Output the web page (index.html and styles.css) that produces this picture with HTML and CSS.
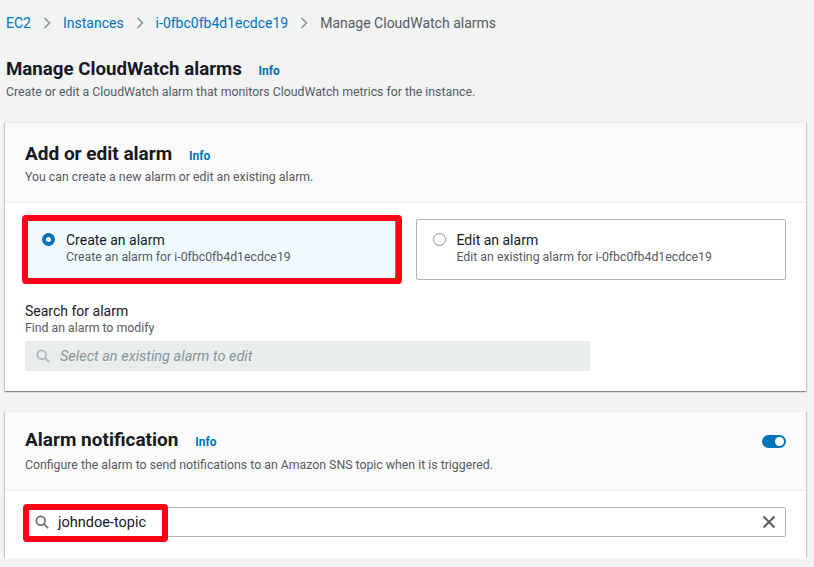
FILE: index.html
```html
<!DOCTYPE html>
<html lang="en">
<head>
<meta charset="utf-8">
<title>Manage CloudWatch alarms</title>
<link rel="stylesheet" href="styles.css">
</head>
<body>
<div class="page">
  <nav class="crumbs">
    <a class="crumb-link" href="#">EC2</a>
    <svg class="sep" width="8" height="12" viewBox="0 0 8 12"><polyline points="1.5,1 6.5,6 1.5,11" fill="none" stroke="#879596" stroke-width="1.6"/></svg>
    <a class="crumb-link" href="#">Instances</a>
    <svg class="sep" width="8" height="12" viewBox="0 0 8 12"><polyline points="1.5,1 6.5,6 1.5,11" fill="none" stroke="#879596" stroke-width="1.6"/></svg>
    <a class="crumb-link" href="#">i-0fbc0fb4d1ecdce19</a>
    <svg class="sep" width="8" height="12" viewBox="0 0 8 12"><polyline points="1.5,1 6.5,6 1.5,11" fill="none" stroke="#879596" stroke-width="1.6"/></svg>
    <span class="crumb-current">Manage CloudWatch alarms</span>
  </nav>

  <header class="page-head">
    <h1 class="page-title">Manage CloudWatch alarms <a class="info" href="#">Info</a></h1>
    <p class="page-desc">Create or edit a CloudWatch alarm that monitors CloudWatch metrics for the instance.</p>
  </header>

  <section class="panel">
    <div class="panel-head">
      <h2 class="panel-title">Add or edit alarm <a class="info" href="#">Info</a></h2>
      <p class="panel-desc">You can create a new alarm or edit an existing alarm.</p>
    </div>
    <div class="panel-body">
      <div class="tiles">
        <label class="tile tile-selected annotated">
          <span class="radio radio-on"></span>
          <span class="tile-text">
            <span class="tile-label">Create an alarm</span>
            <span class="tile-sub">Create an alarm for i-0fbc0fb4d1ecdce19</span>
          </span>
        </label>
        <label class="tile">
          <span class="radio"></span>
          <span class="tile-text">
            <span class="tile-label">Edit an alarm</span>
            <span class="tile-sub">Edit an existing alarm for i-0fbc0fb4d1ecdce19</span>
          </span>
        </label>
      </div>
      <div class="field">
        <div class="field-label">Search for alarm</div>
        <div class="field-desc">Find an alarm to modify</div>
        <div class="search search-disabled">
          <svg class="search-icon" width="14" height="14" viewBox="0 0 16 16"><circle cx="6.5" cy="6.5" r="5" fill="none" stroke="#aab7b8" stroke-width="2"/><line x1="10.2" y1="10.2" x2="15" y2="15" stroke="#aab7b8" stroke-width="2"/></svg>
          <span class="placeholder">Select an existing alarm to edit</span>
        </div>
      </div>
    </div>
  </section>

  <section class="panel">
    <div class="panel-head panel-head-toggle">
      <div class="head-text">
        <h2 class="panel-title">Alarm notification <a class="info" href="#">Info</a></h2>
        <p class="panel-desc panel-desc-wide">Configure the alarm to send notifications to an Amazon SNS topic when it is triggered.</p>
      </div>
      <span class="toggle"><span class="knob"></span></span>
    </div>
    <div class="panel-body panel-body-short">
      <div class="search search-filled">
        <span class="search-value annotated-small">
          <svg class="search-icon" width="14" height="14" viewBox="0 0 16 16"><circle cx="6.5" cy="6.5" r="5" fill="none" stroke="#687078" stroke-width="2"/><line x1="10.2" y1="10.2" x2="15" y2="15" stroke="#687078" stroke-width="2"/></svg>
          <span class="value">johndoe-topic</span>
        </span>
        <svg class="clear" width="14" height="14" viewBox="0 0 14 14"><line x1="1.5" y1="1.5" x2="12.5" y2="12.5" stroke="#545b64" stroke-width="2"/><line x1="12.5" y1="1.5" x2="1.5" y2="12.5" stroke="#545b64" stroke-width="2"/></svg>
      </div>
    </div>
  </section>
</div>
</body>
</html>
```

FILE: styles.css
```css
* { box-sizing: border-box; }

body {
  margin: 0;
  background: #f2f3f3;
  font-family: Roboto, "Liberation Sans", sans-serif;
  color: #16191f;
}

.page {
  padding: 13px 8px 0 5px;
}

.crumbs {
  display: flex;
  align-items: center;
  gap: 12px;
  height: 20px;
  padding-left: 1px;
  font-size: 14px;
}

.crumb-link {
  color: #0073bb;
  text-decoration: none;
}

.crumb-current {
  color: #545b64;
}

.page-head {
  margin-top: 24px;
  padding-left: 1px;
}

.page-title {
  margin: 0;
  font-size: 18.7px;
  line-height: 24px;
  font-weight: 700;
}

.info {
  margin-left: 12px;
  font-size: 12px;
  font-weight: 700;
  color: #0073bb;
  text-decoration: none;
}

.page-desc {
  margin: 1px 0 0;
  font-size: 12.3px;
  line-height: 16px;
  color: #545b64;
}

.panel {
  margin-top: 22px;
  background: #fff;
  border-top: 1px solid #eaeded;
  box-shadow: 0 1px 1px 0 rgba(0, 28, 36, 0.3), 1px 1px 1px 0 rgba(0, 28, 36, 0.15), -1px 1px 1px 0 rgba(0, 28, 36, 0.15);
}

.panel + .panel {
  margin-top: 20px;
}

.panel-head {
  background: #fafafa;
  border-bottom: 1px solid #eaeded;
  padding: 20px 20px 17px 20px;
}

.panel-head-toggle {
  display: flex;
  justify-content: space-between;
  align-items: flex-start;
  padding-top: 17px;
}

.panel-title {
  margin: 0;
  font-size: 19px;
  line-height: 22px;
  font-weight: 700;
}

.panel-desc {
  margin: 2px 0 0;
  font-size: 12.3px;
  line-height: 16px;
  color: #545b64;
}

.panel-desc-wide {
  margin-top: 4px;
}

.panel-body {
  padding: 16px 20px 20px;
}

.tiles {
  display: grid;
  grid-template-columns: 1fr 1fr;
  gap: 20px;
}

.tile {
  position: relative;
  display: flex;
  align-items: flex-start;
  gap: 11px;
  height: 61px;
  padding: 12px 16px 0 16px;
  border: 1px solid #aab7b8;
  border-radius: 2px;
  background: #fff;
}

.tile-selected {
  background: #f1faff;
  border-color: #00a1c9;
}

.annotated::after {
  content: "";
  position: absolute;
  left: -4px;
  top: -5px;
  right: -7px;
  bottom: -5px;
  border: 6px solid #ff0016;
  border-radius: 4px;
}

.radio {
  flex: none;
  width: 13px;
  height: 13px;
  margin-top: 1px;
  border: 1px solid #879596;
  border-radius: 50%;
  background: #fff;
}

.radio-on {
  border: 4px solid #0073bb;
}

.tile-text {
  display: flex;
  flex-direction: column;
}

.tile-label {
  font-size: 14px;
  line-height: 16px;
  color: #16191f;
}

.tile-sub {
  margin-top: 1px;
  font-size: 12.3px;
  line-height: 16px;
  color: #545b64;
}

.field {
  margin-top: 22px;
}

.field-label {
  font-size: 14px;
  line-height: 18px;
}

.field-desc {
  font-size: 12.3px;
  line-height: 16px;
  color: #545b64;
}

.search {
  display: flex;
  align-items: center;
  height: 30px;
  border-radius: 2px;
}

.search-disabled {
  margin-top: 5px;
  width: 565px;
  background: #eaeded;
  padding-left: 11px;
  gap: 10px;
}

.search-icon {
  flex: none;
}

.placeholder {
  font-size: 14.5px;
  font-style: italic;
  color: #879596;
}

.panel-body-short {
  padding: 16px 20px 21px;
}

.search-filled {
  border: 1px solid #aab7b8;
  background: #fff;
  justify-content: space-between;
  padding: 0 9px 0 9px;
}

.search-value {
  position: relative;
  display: flex;
  align-items: center;
  gap: 9px;
}

.value {
  font-size: 14.5px;
  color: #16191f;
}

.annotated-small::after {
  content: "";
  position: absolute;
  left: -12px;
  top: -10px;
  right: -22px;
  bottom: -11px;
  border: 6px solid #ff0016;
  border-radius: 4px;
}

.toggle {
  position: relative;
  flex: none;
  width: 24px;
  height: 13px;
  margin-top: 6px;
  border-radius: 7px;
  background: #0073bb;
}

.knob {
  position: absolute;
  right: 2px;
  top: 2px;
  width: 9px;
  height: 9px;
  border-radius: 50%;
  background: #fff;
}
```
